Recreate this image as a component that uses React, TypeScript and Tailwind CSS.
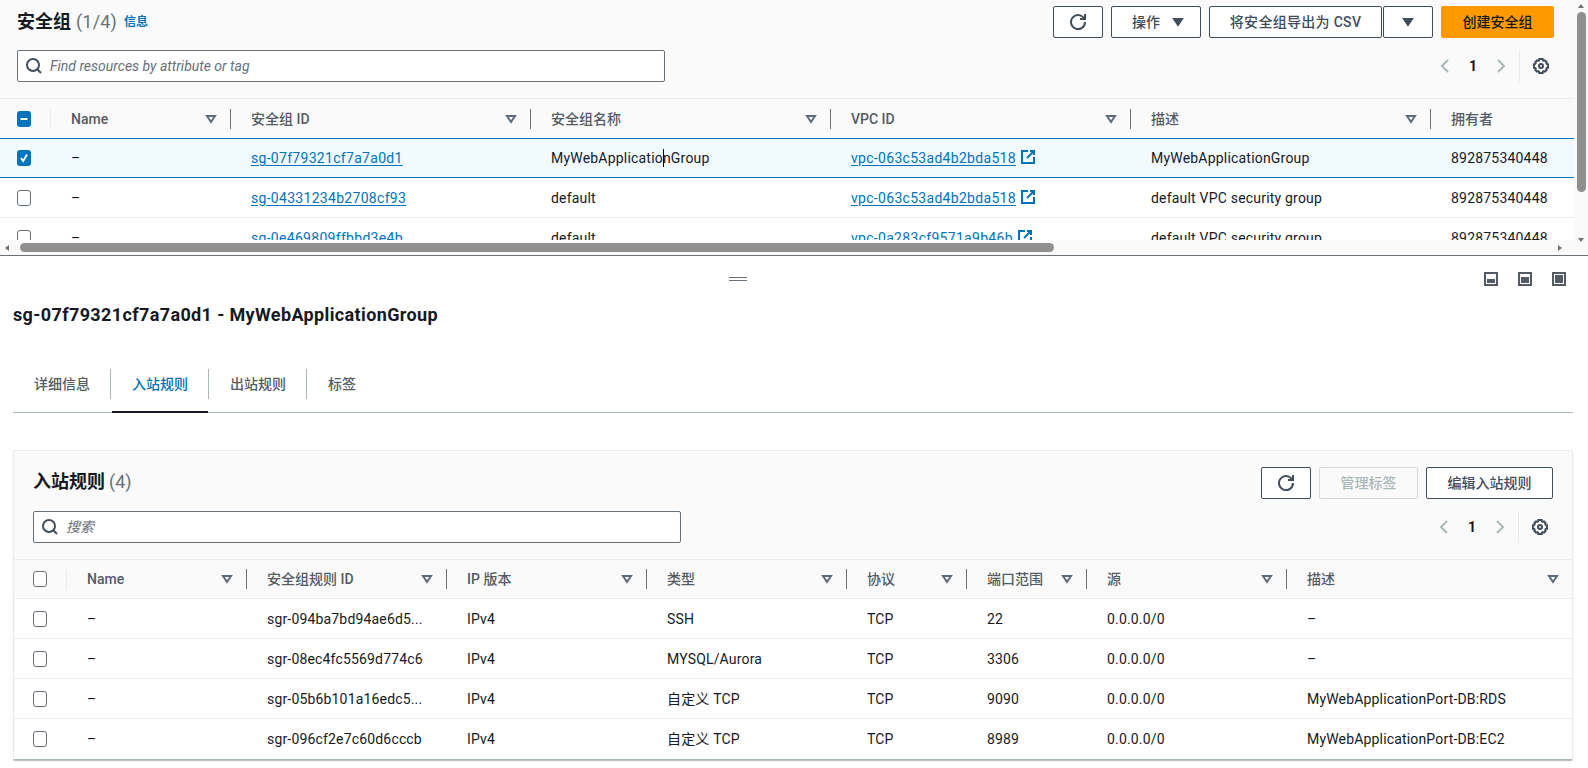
import React from "react";

const font = { fontFamily: '"Roboto","Noto Sans CJK SC",sans-serif' };

function Icon({ className = "", children, size = 16 }: { className?: string; children: React.ReactNode; size?: number }) {
  return (
    <svg width={size} height={size} viewBox="0 0 16 16" fill="none" stroke="currentColor" strokeWidth="2" className={"shrink-0 " + className}>
      {children}
    </svg>
  );
}
const Search = () => (
  <Icon className="text-[#414d5c]">
    <circle cx="7" cy="7" r="6" />
    <path d="m11 11 4 4" />
  </Icon>
);
const Refresh = () => (
  <Icon className="text-[#414d5c]">
    <path d="M10 5h5V0" />
    <path d="M15 8a7 7 0 1 1-.7-3" />
  </Icon>
);
const Caret = () => (
  <Icon className="text-[#414d5c]">
    <path d="M4 5h8l-4 6-4-6z" fill="currentColor" />
  </Icon>
);
const Filter = () => (
  <Icon className="text-[#5f6b7a]">
    <path d="M4 5h8l-4 6-4-6z" />
  </Icon>
);
const External = () => (
  <Icon className="text-[#0073bb] ml-1 inline-block align-[-2px]">
    <path d="M14 8v6H2V2h6" />
    <path d="M10 2h4v4" />
    <path d="m14 2-7 7" />
  </Icon>
);
const Gear = () => (
  <Icon className="text-[#414d5c]">
    <path d="M13.3 5.5c-.2-.5-.1-1.1.3-1.5L12 2.4c-.4.4-1 .5-1.5.3-.5-.2-.8-.7-.8-1.3V1H6.3v.4c0 .6-.3 1.1-.8 1.3-.5.2-1.1.1-1.5-.3L2.4 4c.4.4.5 1 .3 1.5-.2.5-.7.8-1.3.8H1v3.4h.4c.6 0 1.1.3 1.3.8.2.5.1 1.1-.3 1.5L4 13.6c.4-.4 1-.5 1.5-.3.5.2.8.7.8 1.3v.4h3.4v-.4c0-.6.3-1.1.8-1.3.5-.2 1.1-.1 1.5.3l1.6-1.6c-.4-.4-.5-1-.3-1.5.2-.5.7-.8 1.3-.8h.4V6.3h-.4c-.6 0-1.1-.3-1.3-.8z" />
    <circle cx="8" cy="8" r="2" />
  </Icon>
);

function Pager() {
  return (
    <div className="flex items-center h-8">
      <Icon className="text-[#aab7b8] mr-[14px]">
        <path d="M11 2 5 8l6 6" />
      </Icon>
      <span className="w-[12px] text-center text-sm font-bold text-[#16191f]">1</span>
      <Icon className="text-[#aab7b8] ml-[14px]">
        <path d="m5 2 6 6-6 6" />
      </Icon>
      <div className="w-px h-8 bg-[#e9ebed] ml-[10px] mr-[13px]" />
      <Gear />
    </div>
  );
}

function Btn({ children, className = "" }: { children: React.ReactNode; className?: string }) {
  return (
    <div className={"h-8 flex items-center justify-center border border-[#414d5c] rounded-[2px] bg-white text-sm font-medium text-[#414d5c] " + className}>
      {children}
    </div>
  );
}

function Check({ state }: { state: "off" | "on" | "mixed" }) {
  if (state === "off") return <div className="w-[14px] h-[16px] border border-[#687078] rounded-[3px] bg-white" />;
  return (
    <div className="w-[14px] h-[16px] rounded-[3px] bg-[#0073bb] flex items-center justify-center">
      <svg width="12" height="12" viewBox="0 0 12 12" fill="none" stroke="white" strokeWidth="2">
        {state === "on" ? <path d="m3 6 2.2 3L9 2.5" /> : <path d="M2.5 6h7" />}
      </svg>
    </div>
  );
}

function Head({ label, last, noFilter }: { label: string; last?: boolean; noFilter?: boolean }) {
  return (
    <div className="flex items-center h-full pl-5">
      <div className="flex-1 truncate text-sm font-medium text-[#545b64]">{label}</div>
      {!noFilter && (
        <div className={last ? "mr-[11px]" : "mr-[3px]"}>
          <Filter />
        </div>
      )}
      {!last && <div className="w-px h-5 bg-[#687078] ml-2" />}
    </div>
  );
}

const Link = ({ children }: { children: React.ReactNode }) => (
  <span className="text-[#0073bb] underline underline-offset-2 tracking-[0.3px]">{children}</span>
);

const topCols = "grid grid-cols-[51px_180px_300px_300px_300px_300px_200px]";
const topHeads = ["Name", "安全组 ID", "安全组名称", "VPC ID", "描述"];

const topRows = [
  {
    id: "sg-07f79321cf7a7a0d1",
    name: (
      <>
        MyWebApplicatio
        <span className="inline-block w-px h-[18px] -mr-px bg-black align-[-4px]" />
        nGroup
      </>
    ),
    vpc: "vpc-063c53ad4b2bda518",
    desc: "MyWebApplicationGroup",
    sel: true,
  },
  { id: "sg-04331234b2708cf93", name: "default", vpc: "vpc-063c53ad4b2bda518", desc: "default VPC security group", sel: false },
  { id: "sg-0e469809ffbbd3e4b", name: "default", vpc: "vpc-0a283cf9571a9b46b", desc: "default VPC security group", sel: false },
];

const botCols = "grid grid-cols-[53px_180px_200px_200px_200px_120px_120px_200px_285px]";
const botHeads = ["Name", "安全组规则 ID", "IP 版本", "类型", "协议", "端口范围", "源"];
const botRows = [
  ["sgr-094ba7bd94ae6d5...", "IPv4", "SSH", "TCP", "22", "0.0.0.0/0", "–"],
  ["sgr-08ec4fc5569d774c6", "IPv4", "MYSQL/Aurora", "TCP", "3306", "0.0.0.0/0", "–"],
  ["sgr-05b6b101a16edc5...", "IPv4", "自定义 TCP", "TCP", "9090", "0.0.0.0/0", "MyWebApplicationPort-DB:RDS"],
  ["sgr-096cf2e7c60d6cccb", "IPv4", "自定义 TCP", "TCP", "8989", "0.0.0.0/0", "MyWebApplicationPort-DB:EC2"],
];

function WinIcon({ fill }: { fill: string }) {
  return (
    <div className="w-[14px] h-[14px] border-2 border-[#545b64] flex flex-col justify-end p-px">
      <div className={"bg-[#545b64] w-full " + fill} />
    </div>
  );
}

export default function App() {
  return (
    <div className="w-[1588px] h-[768px] overflow-hidden bg-white text-sm text-[#16191f]" style={font}>
      {/* top split panel */}
      <div className="h-[256px] flex border-b border-[#687078] bg-[#fafafa]">
        <div className="w-[1574px] flex flex-col">
          <div className="h-[99px] px-[17px] pt-[6px] shrink-0 border-b border-[#eaeded]">
            <div className="flex items-center h-8">
              <span className="text-lg font-bold text-[#16191f]">安全组</span>
              <span className="text-lg text-[#687078] ml-[5px] tracking-[0.2px]">(1/4)</span>
              <span className="text-xs font-bold text-[#0073bb] ml-[7px]">信息</span>
              <div className="ml-auto flex items-center mr-[3px]">
                <Btn className="w-[50px] mr-2"><Refresh /></Btn>
                <Btn className="w-[90px] mr-2 pl-[6px] gap-[10px]">操作<Caret /></Btn>
                <Btn className="w-[173px] tracking-[0.3px]">将安全组导出为 CSV</Btn>
                <Btn className="w-[50px] ml-px mr-2"><Caret /></Btn>
                <div className="w-[113px] h-8 flex items-center justify-center rounded-[2px] bg-[#ff9900] text-sm font-medium text-[#16191f]">创建安全组</div>
              </div>
            </div>
            <div className="flex items-center mt-3">
              <div className="w-[648px] h-8 border border-[#687078] rounded-[2px] bg-white flex items-center pl-2 gap-2">
                <Search />
                <span className="italic text-sm text-[#687078]">Find resources by attribute or tag</span>
              </div>
              <div className="ml-auto mr-[8px]"><Pager /></div>
            </div>
          </div>
          <div className="flex-1 overflow-hidden">
            <div className={topCols + " w-[1574px] h-[39px] bg-[#fafafa] items-center"}>
              <div className="h-full flex items-center pl-[17px] relative">
                <Check state="mixed" />
                <div className="absolute right-0 top-[10px] w-px h-5 bg-[#eaeded]" />
              </div>
              {topHeads.map((h) => (
                <Head key={h} label={h} />
              ))}
              <Head label="拥有者" last noFilter />
            </div>
            {topRows.map((r) => (
              <div
                key={r.id}
                className={
                  topCols +
                  " h-10 items-center whitespace-nowrap tracking-[0.2px] " +
                  (r.sel ? "bg-[#f1faff] border-y border-[#0073bb]" : "bg-white border-b border-[#eaeded]")
                }
              >
                <div className="pl-[17px] flex"><Check state={r.sel ? "on" : "off"} /></div>
                <div className="pl-5">–</div>
                <div className="pl-5"><Link>{r.id}</Link></div>
                <div className="pl-5">{r.name}</div>
                <div className="pl-5"><Link>{r.vpc}</Link><External /></div>
                <div className="pl-5">{r.desc}</div>
                <div className="pl-5">892875340448</div>
              </div>
            ))}
          </div>
          <div className="h-[15px] shrink-0 flex items-center bg-[#fafafa]">
            <svg width="20" height="12" viewBox="0 0 20 12" className="shrink-0 text-[#707070]">
              <path d="M9 3v6L5 6z" fill="currentColor" />
            </svg>
            <div className="w-[1034px] h-[9px] rounded-full bg-[#8f8f8f]" />
            <svg width="12" height="12" viewBox="0 0 12 12" className="shrink-0 ml-auto mr-[8px] text-[#707070]">
              <path d="M4 3v6l4-3z" fill="currentColor" />
            </svg>
          </div>
        </div>
        <div className="w-[14px] bg-[#fafafa] flex flex-col items-center">
          <svg width="12" height="12" viewBox="0 0 12 12" className="text-[#707070]">
            <path d="M3 8h6L6 4z" fill="currentColor" />
          </svg>
          <div className="w-[9px] h-[180px] rounded-full bg-[#8f8f8f]" />
          <svg width="12" height="12" viewBox="0 0 12 12" className="mt-auto mb-[9px] text-[#707070]">
            <path d="M3 4h6L6 8z" fill="currentColor" />
          </svg>
        </div>
      </div>

      {/* lower split panel */}
      <div className="px-[13px] pr-[15px]">
        <div className="flex items-center h-[46px] relative">
          <div className="mx-auto flex flex-col gap-[2px] ml-[716px]">
            <div className="w-[18px] h-px bg-[#687078]" />
            <div className="w-[18px] h-px bg-[#687078]" />
          </div>
          <div className="absolute right-[7px] top-[16px] flex gap-5">
            <WinIcon fill="h-[4px]" />
            <WinIcon fill="h-[6px]" />
            <WinIcon fill="h-[8px]" />
          </div>
        </div>
        <div className="text-lg font-bold leading-[26px] tracking-[0.37px] text-[#16191f]">sg-07f79321cf7a7a0d1 - MyWebApplicationGroup</div>

        <div className="mt-[41px] h-[44px] border-b border-[#aab7b8] flex items-start">
          {[
            ["详细信息", false],
            ["入站规则", true],
            ["出站规则", false],
            ["标签", false],
          ].map(([t, active], i) => (
            <div key={i} className={"w-[98px] h-[44px] relative flex pl-[21px] text-sm font-medium " + (active ? "text-[#0073bb]" : "text-[#545b64]")}>
              <div className="h-[30px] flex items-center">{t}</div>
              {i < 3 && <div className="absolute right-0 top-0 w-px h-[30px] bg-[#aab7b8]" />}
              {active && <div className="absolute left-[1px] right-[1px] bottom-0 h-[2px] bg-[#16191f]" />}
            </div>
          ))}
        </div>

        <div className="mt-[37px] border border-[#eaeded] border-b-[#aab7b8] rounded-[2px] bg-[#fafafa] shadow-[0_1px_1px_0_rgba(0,28,36,0.3)]">
          <div className="h-[109px] px-[19px] pt-[16px] border-b border-[#eaeded]">
            <div className="flex items-center h-8">
              <span className="text-lg font-bold text-[#16191f] -translate-y-px">入站规则</span>
              <span className="text-lg text-[#687078] ml-[4px] -translate-y-px">(4)</span>
              <div className="ml-auto flex gap-2">
                <Btn className="w-[50px]"><Refresh /></Btn>
                <div className="w-[99px] h-8 flex items-center justify-center border border-[#d5dbdb] rounded-[2px] bg-[#fafafa] text-sm font-medium text-[#aab7b8]">管理标签</div>
                <Btn className="w-[127px]">编辑入站规则</Btn>
              </div>
            </div>
            <div className="flex items-center mt-3">
              <div className="w-[648px] h-8 border border-[#687078] rounded-[2px] bg-white flex items-center pl-2 gap-2">
                <Search />
                <span className="italic text-sm text-[#687078]">搜索</span>
              </div>
              <div className="ml-auto mr-[5px]"><Pager /></div>
            </div>
          </div>
          <div className={botCols + " h-[39px] items-center border-b border-[#eaeded]"}>
            <div className="h-full flex items-center pl-[19px] relative">
              <Check state="off" />
              <div className="absolute right-0 top-[10px] w-px h-5 bg-[#eaeded]" />
            </div>
            {botHeads.map((h) => (
              <Head key={h} label={h} />
            ))}
            <Head label="描述" last />
          </div>
          {botRows.map((r, i) => (
            <div key={i} className={botCols + " h-10 items-center bg-white whitespace-nowrap tracking-[0.17px] " + (i < 3 ? "border-b border-[#eaeded]" : "")}>
              <div className="pl-[19px] flex"><Check state="off" /></div>
              <div className="pl-5">–</div>
              {r.map((c, j) => (
                <div key={j} className="pl-5">{c}</div>
              ))}
            </div>
          ))}
        </div>
      </div>
    </div>
  );
}
